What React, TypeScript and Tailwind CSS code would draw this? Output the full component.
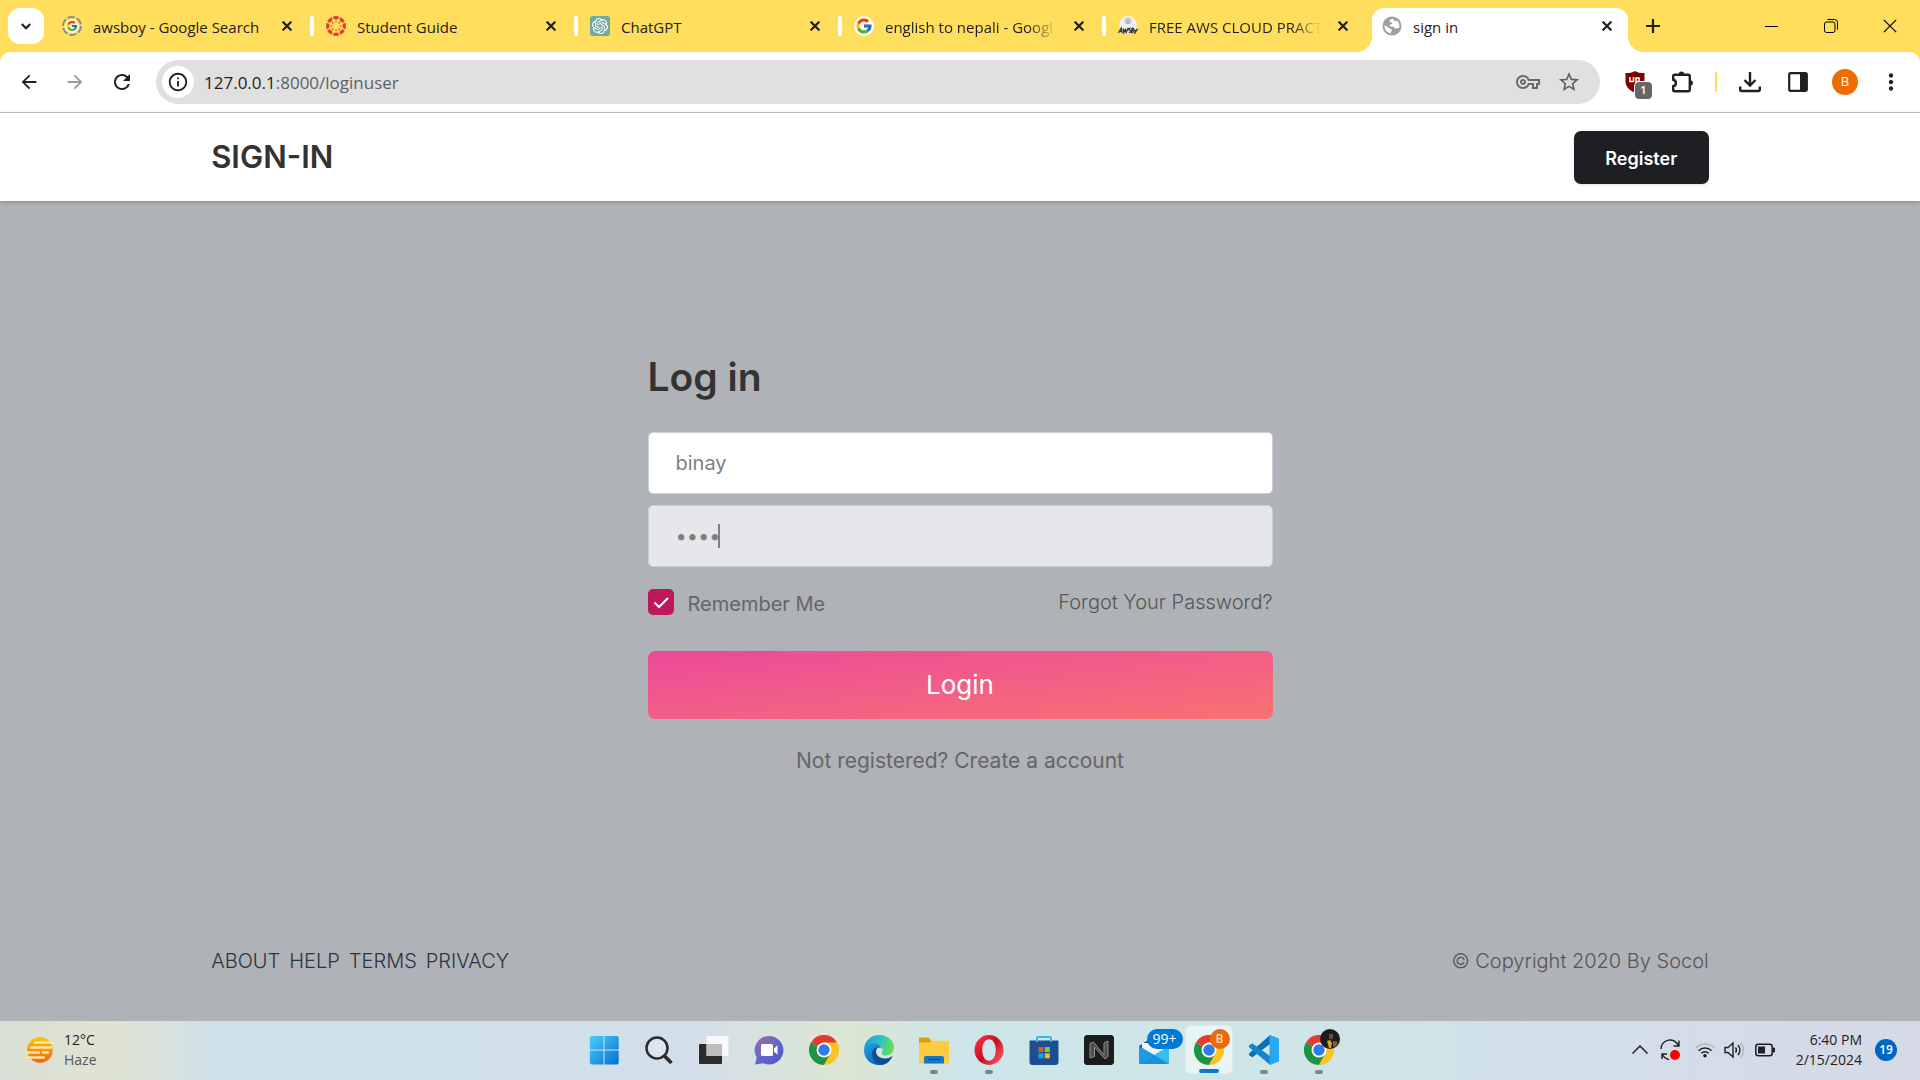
import React from "react";
import { FcGoogle } from "react-icons/fc";
import { SiOpenai } from "react-icons/si";
import {
  MdArrowBack,
  MdArrowForward,
  MdRefresh,
  MdInfoOutline,
  MdOutlineVpnKey,
  MdStarBorder,
  MdMoreVert,
} from "react-icons/md";

const ui = "font-['Open_Sans','Noto_Sans',sans-serif]";

/* ---------- small glyphs ---------- */

function Cross({ size = 10, stroke = 2.2 }: { size?: number; stroke?: number }) {
  return (
    <svg width={size} height={size} viewBox="0 0 10 10" fill="none" stroke="currentColor" strokeWidth={stroke}>
      <path d="M.6.6l8.8 8.8M9.4.6L.6 9.4" />
    </svg>
  );
}

function AwsSearchIcon() {
  return (
    <span className="relative flex size-5 items-center justify-center">
      <svg className="absolute inset-0" width="20" height="20" viewBox="0 0 20 20" fill="none">
        <circle cx="10" cy="10" r="9" stroke="#8a8d91" strokeWidth="1.8" strokeDasharray="7.4 2" />
        <circle cx="10" cy="10" r="7.2" fill="#fff3c4" />
      </svg>
      <FcGoogle className="relative size-3" />
    </span>
  );
}

function CanvasIcon() {
  const turns = [0, 45, 90, 135, 180, 225, 270, 315];
  return (
    <svg width="20" height="20" viewBox="0 0 20 20">
      {turns.map((a) => (
        <g key={a} transform={`rotate(${a} 10 10)`} fill="#e63e2b">
          <path d="M7 .5a9.700 9.700 0 0 1 6 0 3 3.100 0 0 1-6 0z" />
          <circle cx="10" cy="5.600" r="0.8" />
        </g>
      ))}
    </svg>
  );
}

function ChatIcon() {
  return (
    <span className="flex size-5 items-center justify-center rounded-[3px] bg-[#74aa9c]">
      <SiOpenai className="size-4 text-white" />
    </span>
  );
}

function GoogleIcon() {
  return (
    <span className="flex size-5 items-center justify-center rounded-full bg-white">
      <FcGoogle className="size-[18px]" />
    </span>
  );
}

function AwsBoyIcon() {
  return (
    <svg width="20" height="20" viewBox="0 0 20 20" fill="none">
      <circle cx="10" cy="9" r="9" fill="#eef0f2" />
      <circle cx="10" cy="5" r="2.8" fill="#d5d8dc" stroke="#9aa0a6" strokeWidth=".7" />
      <path d="M8.6 5h2.8M9 6.4h2" stroke="#777" strokeWidth=".6" />
      <path
        d="M.4 17l3-5 .8 5M2 15.4h2.4M5.4 12.6l.4 4 1.6-3 .8 3 2-4.6M12.6 12.2c-2-.2-2.4 1.8-.8 2 1.8.2 1 2.4-1 2.2M14 12l-.6 4.6c2.4 0 2.6-2 1-2.3 1.6-.3 1.6-2.3-.4-2.3M16.4 13.4l.8 2.2 2.2-2.6-3 5"
        stroke="#34373b"
        strokeWidth="1.3"
      />
    </svg>
  );
}

function GlobeIcon() {
  return (
    <svg width="20" height="20" viewBox="0 0 20 20">
      <circle cx="10" cy="10" r="9.5" fill="#9aa0a6" />
      <path
        d="M10.6 2.4c-1.8.6-3.2 1.6-3 3 .2 1 2 .6 2.4 1.4.4 1-.6 2-2.2 2-.6 1.4.6 1.8 2 1.8 1.6 0 2.8.8 3 2 .8.2 2.600-.6 4.400-.6a7.600 7.600 0 0 0-2.200-7.200c-1-.2-1.800.8-2.600 0-.6-.8-.6-1.800-1.800-2.400zM2.400 9.400a7.700 7.700 0 0 0 6.400 8.100c.6-.6-.2-1.500.6-2.300 1-.8.4-2-.8-2.400-2.200-.6-3.200-3.200-6.200-3.400z"
        fill="#fff"
      />
    </svg>
  );
}

/* ---------- browser tabs ---------- */

type Tab = { title: string; icon: React.ReactNode; fade?: boolean };

const tabs: Tab[] = [
  { title: "awsboy - Google Search", icon: <AwsSearchIcon /> },
  { title: "Student Guide", icon: <CanvasIcon /> },
  { title: "ChatGPT", icon: <ChatIcon /> },
  { title: "english to nepali - Googl", icon: <GoogleIcon />, fade: true },
  { title: "FREE AWS CLOUD PRACT", icon: <AwsBoyIcon />, fade: true },
];

function TabBody({ title, icon, fade }: Tab) {
  return (
    <>
      <span className="shrink-0">{icon}</span>
      <span
        className={
          "ml-[11px] min-w-0 flex-1 pt-[2px] text-left whitespace-nowrap " +
          (fade ? "[mask-image:linear-gradient(to_right,black_82%,transparent_99%)]" : "")
        }
      >
        {title}
      </span>
      <button aria-label={"Close " + title} className="ml-2 flex size-6 shrink-0 items-center justify-center">
        <Cross />
      </button>
    </>
  );
}

function TabStrip() {
  return (
    <div className="flex h-[52px] bg-[#ffdd5d] pl-2 text-[#1f2023]">
      <button aria-label="Search tabs" className="mt-2 mr-[2px] flex size-9 shrink-0 items-center justify-center rounded-xl bg-white">
        <svg width="10" height="7" viewBox="0 0 10 7" fill="none" stroke="currentColor" strokeWidth="2.2">
          <path d="M.7 1l4.300 4.300L9.300 1" />
        </svg>
      </button>
      {tabs.map((t, i) => (
        <div key={t.title} className="flex w-66 min-w-0 items-center text-[15px]">
          <span className={"h-5 w-1 shrink-0 rounded-sm " + (i === 0 ? "bg-transparent" : "bg-white")} />
          <div className="flex min-w-0 flex-1 items-center pr-[11px] pl-3">
            <TabBody {...t} />
          </div>
        </div>
      ))}
      <div className="relative mt-2 ml-[6px] flex w-64 min-w-0 items-center rounded-t-xl bg-white pr-[9px] pb-2 pl-[10px] text-[15px]">
        <span className="absolute bottom-0 -left-4 size-4 bg-[radial-gradient(circle_at_0_0,transparent_16px,white_16px)]" />
        <span className="absolute -right-4 bottom-0 size-4 bg-[radial-gradient(circle_at_100%_0,transparent_16px,white_16px)]" />
        <TabBody title="sign in" icon={<GlobeIcon />} />
      </div>
      <button aria-label="New tab" className="ml-[7px] flex w-9 items-center justify-center">
        <svg width="14" height="14" viewBox="0 0 14 14" stroke="currentColor" strokeWidth="2.200">
          <path d="M7 0v14M0 7h14" />
        </svg>
      </button>
      <div className="ml-auto flex">
        <button aria-label="Minimize" className="flex w-[59px] items-center justify-center">
          <span className="h-px w-[13px] bg-black" />
        </button>
        <button aria-label="Restore" className="flex w-[59px] items-center justify-center">
          <svg width="14" height="14" viewBox="0 0 14 14" fill="none" stroke="#000">
            <rect x=".5" y="3" width="10.500" height="10.500" rx="2" />
            <path d="M3.500 .5H10.500a3 3 0 0 1 3 3V10.500" />
          </svg>
        </button>
        <button aria-label="Close window" className="flex w-[60px] items-center justify-center text-black">
          <Cross size={14} stroke={0.9} />
        </button>
      </div>
    </div>
  );
}

function Toolbar() {
  return (
    <div className="bg-[#ffdd5d]">
      <div className="flex h-[61px] items-center rounded-t-[10px] border-b border-[#c8c8c8] bg-white px-[6px] text-[#1f2023]">
        <button aria-label="Back" className="flex w-[46px] justify-center"><MdArrowBack className="size-[22px]" /></button>
        <button aria-label="Forward" className="flex w-[46px] justify-center text-[#9b9b9b]"><MdArrowForward className="size-[22px]" /></button>
        <button aria-label="Reload" className="flex w-12 justify-center"><MdRefresh className="size-6" /></button>
        <div className="ml-[10px] flex h-11 min-w-0 flex-1 items-center rounded-full bg-[#e0e0e0] pr-[19px] pl-[6px]">
          <button aria-label="Site information" className="flex size-8 shrink-0 items-center justify-center rounded-full bg-white">
            <MdInfoOutline className="size-[22px]" />
          </button>
          <div className="ml-[10px] flex-1 pt-px text-[17px] text-[#5f6063]">
            <span className="text-[#1f2023]">127.0.0.1</span>:8000/loginuser
          </div>
          <button aria-label="Passwords" className="text-[#6a6a6a]"><MdOutlineVpnKey className="size-6" /></button>
          <button aria-label="Bookmark" className="ml-[17px] text-[#5f5f5f]"><MdStarBorder className="size-6" /></button>
        </div>
        <button aria-label="uBlock" className="relative ml-[11px] flex w-[47px] justify-center">
          <svg width="20" height="22" viewBox="0 0 20 22">
            <path d="M10 0c2.500 1.800 5.500 2 9.500 2v8c0 6-4 9-9.500 12C4.500 19 .5 16 .5 10V2C4.500 2 7.500 1.800 10 0z" fill="#800000" />
            <path d="M5 6v4.500h3.500V6M11 12V7h3v3.500h-3" fill="none" stroke="#fff" strokeWidth="1.500" />
          </svg>
          <span className="absolute top-[10px] left-[23px] flex size-[19px] items-center justify-center rounded-[5px] border border-white bg-[#666] text-[11px] font-semibold text-white">1</span>
        </button>
        <button aria-label="Extensions" className="flex w-12 justify-center">
          <svg width="22" height="22" viewBox="0 0 22 22" fill="none">
            <path d="M2.200 5.200a1.500 1.500 0 0 1 1.500-1.500h13.600a1.500 1.500 0 0 1 1.500 1.500v13.600a1.500 1.500 0 0 1-1.500 1.500H3.700a1.500 1.500 0 0 1-1.500-1.500v-3.600c3.600-.6 3.600-5.800 0-6.400z" stroke="currentColor" strokeWidth="2.400" />
            <path d="M7.800 3.200a2.700 2.700 0 0 1 5.400 0zM19.200 9.300a2.700 2.700 0 0 1 0 5.400z" fill="currentColor" />
          </svg>
        </button>
        <span className="mx-[9px] h-5 w-[2px] bg-[#ffdd5d]" />
        <button aria-label="Downloads" className="flex w-12 justify-center">
          <svg width="22" height="22" viewBox="0 0 22 22" fill="none" stroke="currentColor" strokeWidth="2.400">
            <path d="M11 1v13M5.500 9l5.500 5.500L16.500 9M1.200 15.500v3a1.500 1.500 0 0 0 1.500 1.500h16.600a1.500 1.500 0 0 0 1.500-1.500v-3" />
          </svg>
        </button>
        <button aria-label="Side panel" className="flex w-12 justify-center">
          <svg width="20" height="20" viewBox="0 0 20 20" fill="none">
            <rect x="1.200" y="1.200" width="17.600" height="17.600" rx="1.500" stroke="currentColor" strokeWidth="2.200" />
            <path d="M12 1h7v18h-7z" fill="currentColor" />
          </svg>
        </button>
        <button aria-label="Profile" className="flex w-[46px] justify-center">
          <span className="flex size-[26px] items-center justify-center rounded-full bg-[#ef6c00] text-[13px] text-white">B</span>
        </button>
        <button aria-label="Menu" className="flex w-[46px] justify-center"><MdMoreVert className="size-[26px]" /></button>
      </div>
    </div>
  );
}

/* ---------- page ---------- */

function LoginPage() {
  const field =
    "block h-[62px] w-full rounded-[5px] border border-[#cbced3] px-[27px] text-xl text-[#808080] caret-transparent outline-none";
  return (
    <div className="flex flex-1 flex-col bg-[#afb2b7] font-['Inter',sans-serif] text-[#666]">
      <header className="relative bg-white shadow-[0_1px_4px_rgba(0,0,0,0.25)]">
        <div className="mx-auto flex h-[88px] w-[78%] items-center justify-between">
          <h1 className="text-[31px] font-semibold text-[#333]">SIGN-IN</h1>
          <a href="#register" className="flex h-[53px] w-[135px] items-center justify-center rounded-[7px] bg-[#1e1f23] pt-[3px] text-lg font-semibold text-white shadow-sm">
            Register
          </a>
        </div>
      </header>

      <main className="flex flex-1 flex-col items-center justify-center pt-[26px]">
        <form className="w-full max-w-[625px] text-xl" onSubmit={(e) => e.preventDefault()}>
          <h2 className="mb-[31px] text-[39px] leading-[48px] font-semibold text-[#333]">Log in</h2>
          <input aria-label="Username" className={field + " bg-white"} defaultValue="binay" />
          <div className="relative mt-[11px]">
            <input aria-label="Password" type="password" className={field + " bg-[#e5e7eb]"} defaultValue="pass" />
            <span className="absolute top-[19px] left-[70px] h-6 w-[2px] bg-[#808080]" />
          </div>
          <div className="mt-[22px] flex h-[26px] items-center justify-between">
            <label className="flex items-center gap-[14px]">
              <span className="relative flex size-[26px]">
                <input type="checkbox" defaultChecked className="size-[26px] appearance-none rounded-[5px] bg-[#be185d]" />
                <svg className="pointer-events-none absolute inset-0" width="26" height="26" viewBox="0 0 26 26" fill="none" stroke="#fff" strokeWidth="2">
                  <path d="M6.500 13.500l4.500 4.500L20 9" />
                </svg>
              </span>
              <span className="pt-[3px]">Remember Me</span>
            </label>
            <a href="#forgot" className="font-light text-[#565656]">Forgot Your Password?</a>
          </div>
          <button className="mt-9 flex h-[68px] w-full items-center justify-center rounded-[7px] bg-gradient-to-br from-[#ec4899] to-[#f87171] text-[26px] text-white">
            Login
          </button>
          <p className="mt-7 text-center text-[21px] leading-7">
            Not registered? <a href="#create">Create a account</a>
          </p>
        </form>
      </main>

      <footer className="mx-auto flex h-[120px] w-[78%] items-center justify-between text-xl font-light text-[#565656]">
        <nav className="flex gap-[9px] text-[#2a3442]">
          <a href="#about">ABOUT</a>
          <a href="#help">HELP</a>
          <a href="#terms">TERMS</a>
          <a href="#privacy">PRIVACY</a>
        </nav>
        <p>© Copyright 2020 By Socol</p>
      </footer>
    </div>
  );
}

/* ---------- taskbar ---------- */

function Chrome() {
  return (
    <svg width="30" height="30" viewBox="0 0 30 30">
      <path d="M15 15L2 7.500A15 15 0 0 1 28 7.500z" fill="#e33b2e" />
      <path d="M15 15L2 7.500A15 15 0 0 0 15 30l6.500-11.200z" fill="#1e9443" />
      <path d="M15 7.500h13A15 15 0 0 1 15 30l6.500-11.250z" fill="#fcc31e" />
      <circle cx="15" cy="15" r="7.500" fill="#fff" />
      <circle cx="15" cy="15" r="5.700" fill="#2f7bea" />
    </svg>
  );
}

function WindowsLogo() {
  return (
    <svg width="30" height="30" viewBox="0 0 30 30">
      <defs>
        <linearGradient id="win" x1="0" y1="0" x2="30" y2="30" gradientUnits="userSpaceOnUse">
          <stop stopColor="#4fd0fb" />
          <stop offset="1" stopColor="#0270d0" />
        </linearGradient>
      </defs>
      <path d="M2.500 1H14.500V14.500H.8V2.500zM15.500 1h13l1.200 1.500v12H15.500zM.8 15.500H14.500V29.500h-12L.8 28zM15.500 15.500h14.200V28l-1.200 1.500h-13z" fill="url(#win)" />
    </svg>
  );
}

function SearchGlass() {
  return (
    <svg width="30" height="30" viewBox="0 0 30 30" fill="none" stroke="#2b2b2b">
      <circle cx="13" cy="13" r="10.500" fill="#dfe6ee" fillOpacity=".7" strokeWidth="2.500" />
      <path d="M20.500 21l7 7" strokeWidth="3.500" />
    </svg>
  );
}

function TaskView() {
  return (
    <svg width="30" height="30" viewBox="0 0 30 30">
      <rect x="0" y="9" width="23" height="20" rx="1" fill="#2d2c2a" />
      <rect x="7.500" y="1" width="22" height="20" rx="1" fill="#fff" fillOpacity=".78" />
      <rect x="7.500" y="9" width="15.500" height="12" fill="#bdbdbd" />
    </svg>
  );
}

function TeamsChat() {
  return (
    <svg width="30" height="30" viewBox="0 0 30 30">
      <defs>
        <linearGradient id="teams" x1="4" y1="2" x2="24" y2="28" gradientUnits="userSpaceOnUse">
          <stop stopColor="#9a68a8" />
          <stop offset=".5" stopColor="#6668c9" />
          <stop offset="1" stopColor="#5059c9" />
        </linearGradient>
      </defs>
      <path d="M15 1a14.200 14.200 0 1 1-5.500 27.200L1 29.500l1.700-7A14.200 14.200 0 0 1 15 1z" fill="url(#teams)" />
      <rect x="7" y="9" width="12" height="12" rx="1.500" fill="#fff" />
      <path d="M20 13.500l3.500-3.200v9.400L20 16.500z" fill="#fff" />
    </svg>
  );
}

function Edge() {
  return (
    <svg width="30" height="30" viewBox="0 0 30 30">
      <defs>
        <linearGradient id="edgeTop" x1="2" y1="8" x2="29" y2="14" gradientUnits="userSpaceOnUse">
          <stop stopColor="#1fa2df" />
          <stop offset=".5" stopColor="#2fc3c4" />
          <stop offset="1" stopColor="#6be04f" />
        </linearGradient>
        <linearGradient id="edgeLeft" x1="2" y1="10" x2="16" y2="30" gradientUnits="userSpaceOnUse">
          <stop stopColor="#1b9be0" />
          <stop offset="1" stopColor="#0a64b8" />
        </linearGradient>
      </defs>
      <path d="M0 15C0 6 7 0 15.500 0 24 0 30 6 30 12.500c0 5-3.500 8-8 8-3.500 0-5-1.300-4-3 2.500-4.500-1.500-8-6-8C6.500 9.500 1.500 11 0 15z" fill="url(#edgeTop)" />
      <path d="M0 15c1-4.500 5-6.500 9.500-6.500 4 0 8 2 8.500 5.500-1-1.500-5.500-2.500-6 2.500-.5 6 5 10 10 10 1.500 0 3-.5 4-1-2.500 3-6.500 4.500-11 4.500C7 30 0 24 0 15z" fill="url(#edgeLeft)" />
      <path d="M8 19c0-4 2.500-7 6-7-1.500 1-2 2.500-2 4.500 0 4 4 7 9 7 3 0 5-1 6.500-2 .8-.4 1 .2.500 1C25.500 27 20.500 30 16 30c-5-.5-8-6-8-11z" fill="#0d4f97" />
    </svg>
  );
}

function Folder() {
  return (
    <svg width="30" height="30" viewBox="0 0 30 30">
      <path d="M0 2.500h9.500l3 3.500H30v6H0z" fill="#e09c0c" />
      <path d="M0 7.500h10.500l2.500-1.800h17V28.500H0z" fill="#fccb42" />
      <path d="M5 28.500V23a2 2 0 0 1 2-2h16a2 2 0 0 1 2 2v5.500z" fill="#0f76c8" />
      <path d="M9 24.500h12" stroke="#0a4f92" strokeWidth="1.300" />
    </svg>
  );
}

function Opera() {
  return (
    <svg width="30" height="30" viewBox="0 0 30 30">
      <defs>
        <linearGradient id="opera" x1="3" y1="4" x2="28" y2="24" gradientUnits="userSpaceOnUse">
          <stop stopColor="#ff2a3c" />
          <stop offset=".5" stopColor="#c50f22" />
          <stop offset="1" stopColor="#f8525a" />
        </linearGradient>
      </defs>
      <path fillRule="evenodd" d="M15 0a14.500 15 0 1 0 0 30 14.500 15 0 1 0 0-30zm0 4.200c4 0 6.800 4.500 6.800 10.800S19 25.800 15 25.800 8.200 21.300 8.200 15 11 4.200 15 4.200z" fill="url(#opera)" />
    </svg>
  );
}

function Store() {
  return (
    <svg width="30" height="30" viewBox="0 0 30 30">
      <path d="M.5 5.500h29V27a3 3 0 0 1-3 3h-23a3 3 0 0 1-3-3z" fill="#1c4f90" />
      <path d="M8 7V3a1 1 0 0 1 1-1h12a1 1 0 0 1 1 1v4" fill="none" stroke="#33b7ee" strokeWidth="2" />
      <path d="M9.500 12H14.500v5h-5z" fill="#f1511b" />
      <path d="M15.800 12h5v5h-5z" fill="#80cc28" />
      <path d="M9.500 18.300H14.500v5h-5z" fill="#00adef" />
      <path d="M15.800 18.300h5v5h-5z" fill="#fbbc09" />
    </svg>
  );
}

function NIcon() {
  return (
    <svg width="30" height="30" viewBox="0 0 30 30" fill="none">
      <path d="M2 0h26l2 2v26l-2 2H2l-2-2V2z" fill="#1c1c1c" />
      <path d="M6 23V8.500L9.500 7 20 20V8l4-2v15.500L21 24 10.500 12v9.500z" fill="#4c4f52" stroke="#8b8e91" strokeWidth="1" />
    </svg>
  );
}

function Mail() {
  return (
    <span className="relative">
      <svg width="30" height="30" viewBox="0 0 30 30">
        <path d="M0 11L15 1l15 10v9H0z" fill="#0c59a4" />
        <path d="M3 8h24v7l-12 7L3 13z" fill="#f0f2f4" />
        <path d="M0 11l17 10L0 29z" fill="#1a9be3" />
        <path d="M30 11v18H0z" fill="#35bdf0" />
        <path d="M15 20l15 9H0z" fill="#1b8fdc" />
      </svg>
      <span className="absolute -top-[6px] left-2 flex h-5 w-9 items-center justify-center rounded-full bg-[#0078d4] text-sm text-white">99+</span>
    </span>
  );
}

function ChromeWork() {
  return (
    <span className="relative">
      <Chrome />
      <span className="absolute -top-[6px] left-4 flex size-5 items-center justify-center rounded-full bg-[#ea6a0b] text-xs font-semibold text-[#ffd9b5]">B</span>
    </span>
  );
}

function ChromePhoto() {
  return (
    <span className="relative">
      <Chrome />
      <svg className="absolute -top-[6px] left-4" width="20" height="20" viewBox="0 0 20 20">
        <circle cx="10" cy="10" r="10" fill="#1d1b1d" />
        <path d="M9 5h4v5H9z" fill="#6b4a4b" />
        <path d="M7 12l3-1 2 3-1 5H9z" fill="#d9a520" />
        <path d="M13 12l5 1-2 4-3 1z" fill="#84651f" />
      </svg>
    </span>
  );
}

function VsCode() {
  return (
    <svg width="30" height="30" viewBox="0 0 30 30">
      <path d="M22 0v8.200L3.500 22.200 0 20.300v-1.800L20 1z" fill="#0a6fb8" />
      <path d="M22 30v-8.200L3.500 8.500 0 10.300v2L20 29z" fill="#1386cf" />
      <path d="M21 0l9 3.500v23L21 30l-.5-.8V1z" fill="#29a7f0" />
    </svg>
  );
}

type App = { name: string; icon: React.ReactNode; state?: "open" | "active" };

const apps: App[] = [
  { name: "Start", icon: <WindowsLogo /> },
  { name: "Search", icon: <SearchGlass /> },
  { name: "Task view", icon: <TaskView /> },
  { name: "Chat", icon: <TeamsChat /> },
  { name: "Chrome", icon: <Chrome /> },
  { name: "Edge", icon: <Edge /> },
  { name: "Files", icon: <Folder />, state: "open" },
  { name: "Opera", icon: <Opera />, state: "open" },
  { name: "Store", icon: <Store /> },
  { name: "N", icon: <NIcon /> },
  { name: "Mail", icon: <Mail /> },
  { name: "Chrome work", icon: <ChromeWork />, state: "active" },
  { name: "Code", icon: <VsCode />, state: "open" },
  { name: "Chrome photo", icon: <ChromePhoto />, state: "open" },
];

function Taskbar() {
  return (
    <div className="flex h-[59px] items-center justify-between bg-[linear-gradient(90deg,#d9ded6_0%,#e0e3cf_5%,#dae2dc_8%,#d0e1ea_11%,#cfe0e9_22%,#d3dfea_36%,#dbe6d2_44%,#cce5ea_50%,#cfe6e6_65%,#d2e0ea_80%,#d5d9e6_100%)] pr-1 pb-[2px] text-[#1f2023]">
      <div className="flex flex-1 items-center pl-[25px]">
        <svg width="30" height="26" viewBox="0 0 30 26">
          <defs>
            <linearGradient id="sun" x1="0" y1="0" x2="0" y2="26" gradientUnits="userSpaceOnUse">
              <stop stopColor="#fdc500" />
              <stop offset="1" stopColor="#f0650c" />
            </linearGradient>
          </defs>
          <circle cx="15" cy="13" r="12.800" fill="url(#sun)" />
          <path d="M10 5.500h19M6 10.500h9M17 10.500h9M0 15.500h14M18 15.500h5M1 20.500h18" stroke="#f6e3ae" strokeWidth="2.400" strokeLinecap="round" />
        </svg>
        <div className="ml-[9px] text-sm leading-5">
          <div>12°C</div>
          <div className="text-[#55585a]">Haze</div>
        </div>
      </div>
      <div className="flex">
        {apps.map((a) => (
          <button key={a.name} aria-label={a.name} className="flex h-[49px] w-[55px] justify-center">
            <span
              className={
                "relative flex h-full w-12 items-center justify-center rounded-md " +
                (a.state === "active" ? "border border-[#dcebee] bg-white/55" : "")
              }
            >
              {a.icon}
              {a.state === "open" && <span className="absolute bottom-0 left-5 h-1 w-2 rounded-full bg-[#7d8586]" />}
              {a.state === "active" && <span className="absolute bottom-0 left-[13px] h-1 w-5 rounded-full bg-[#0a78d4]" />}
            </span>
          </button>
        ))}
      </div>
      <div className="flex flex-1 items-center justify-end pr-[19px]">
        <svg width="16" height="9" viewBox="0 0 16 9" fill="none" stroke="currentColor" strokeWidth="1.500">
          <path d="M.5 8.500L8 1l7.500 7.500" />
        </svg>
        <svg className="ml-3" width="20" height="22" viewBox="0 0 20 22" fill="none" stroke="currentColor" strokeWidth="1.400">
          <path d="M1 10A9 9 0 0 1 18.500 7M19 1.500V7h-5.500M2 20v-5h5M2.500 15.500A9 9 0 0 0 9 20.500" />
          <circle cx="15" cy="16" r="5" fill="#f00" stroke="none" />
        </svg>
        <svg className="ml-[15px]" width="20" height="16" viewBox="0 0 20 16" fill="none" strokeWidth="1.500">
          <path d="M.7 6a13 13 0 0 1 18.600 0" stroke="#b3b9c0" />
          <path d="M3.500 8.700a9.200 9.200 0 0 1 13 0M6.300 11.300a5.300 5.300 0 0 1 7.400 0" stroke="currentColor" />
          <circle cx="10" cy="13.800" r="1.800" fill="currentColor" />
        </svg>
        <svg className="ml-[9px]" width="21" height="18" viewBox="0 0 21 18" fill="none" stroke="currentColor" strokeWidth="1.400">
          <path d="M1 6.500h3L9 2v14l-5-4.500H1zM11.500 6.500a4 4 0 0 1 0 5M14 4a7.500 7.500 0 0 1 0 10" />
          <path d="M16.500 1.500a11 11 0 0 1 0 15" stroke="#b3b9c0" />
        </svg>
        <svg className="ml-[10px]" width="21" height="14" viewBox="0 0 21 14" fill="none">
          <rect x=".8" y="1.300" width="16.400" height="11.400" rx="2.500" stroke="currentColor" strokeWidth="1.500" />
          <rect x="3" y="3.500" width="7" height="7" fill="currentColor" />
          <path d="M18 5h1.500v4H18z" stroke="currentColor" fill="currentColor" />
        </svg>
        <div className="ml-5 text-right text-sm leading-5">
          <div>6:40 PM</div>
          <div>2/15/2024</div>
        </div>
        <span className="ml-[13px] flex size-[22px] items-center justify-center rounded-full bg-[#0067c0] text-xs font-semibold text-white">19</span>
      </div>
    </div>
  );
}

export default function App() {
  return (
    <div className={"flex min-h-screen flex-col " + ui}>
      <TabStrip />
      <Toolbar />
      <LoginPage />
      <Taskbar />
    </div>
  );
}
